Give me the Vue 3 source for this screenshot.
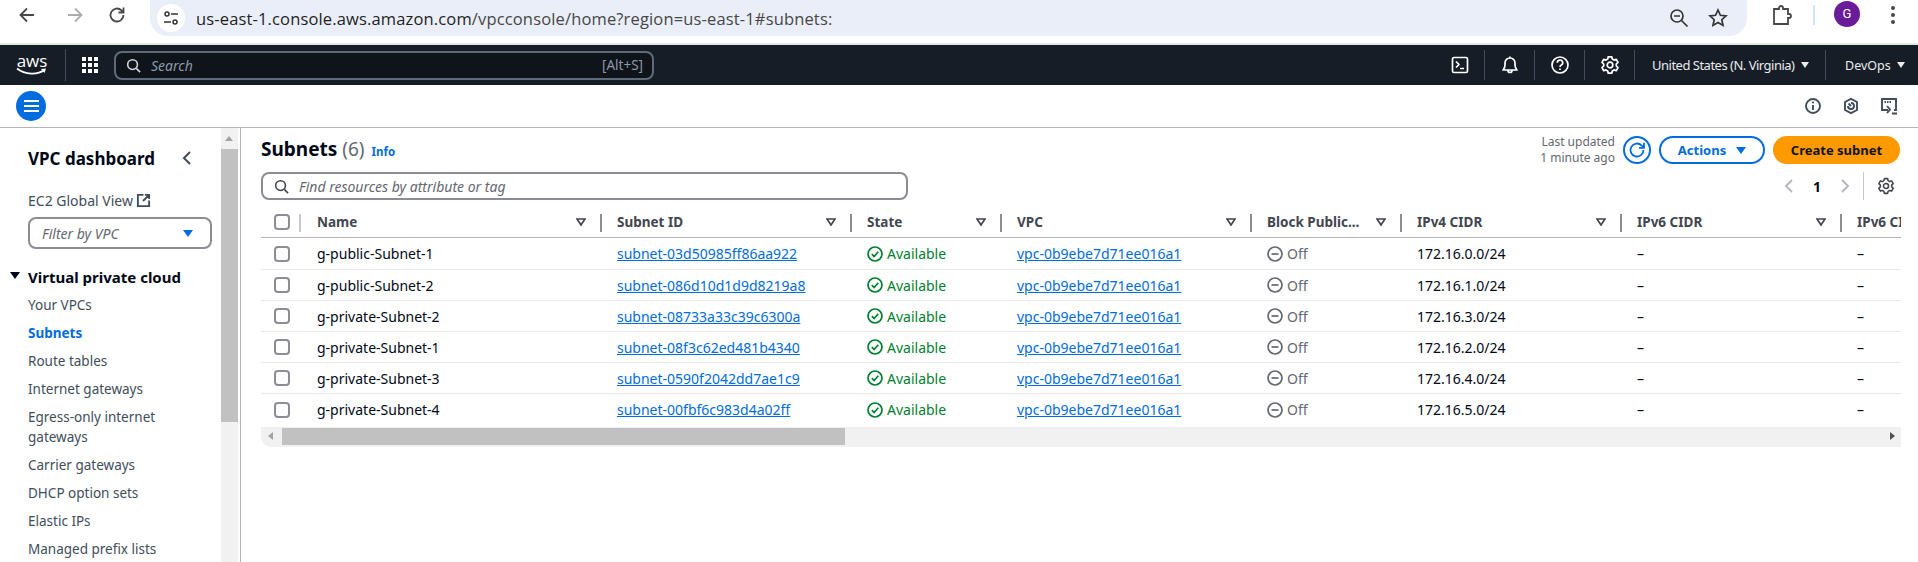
<script setup>
const navItems = ['Your VPCs', 'Subnets', 'Route tables', 'Internet gateways', 'Egress-only internet gateways', 'Carrier gateways', 'DHCP option sets', 'Elastic IPs', 'Managed prefix lists']
const columns = ['Subnet ID', 'State', 'VPC', 'Block Public...', 'IPv4 CIDR', 'IPv6 CIDR', 'IPv6 CIDR']
const subnets = [
  { name: 'g-public-Subnet-1', id: 'subnet-03d50985ff86aa922', cidr: '172.16.0.0/24' },
  { name: 'g-public-Subnet-2', id: 'subnet-086d10d1d9d8219a8', cidr: '172.16.1.0/24' },
  { name: 'g-private-Subnet-2', id: 'subnet-08733a33c39c6300a', cidr: '172.16.3.0/24' },
  { name: 'g-private-Subnet-1', id: 'subnet-08f3c62ed481b4340', cidr: '172.16.2.0/24' },
  { name: 'g-private-Subnet-3', id: 'subnet-0590f2042dd7ae1c9', cidr: '172.16.4.0/24' },
  { name: 'g-private-Subnet-4', id: 'subnet-00fbf6c983d4a02ff', cidr: '172.16.5.0/24' }
]
const gearPath = 'M8.200 1.800h3.600l.5 2.300 1.700 1 2.200-.8 1.800 3.100-1.700 1.600v2l1.700 1.600-1.800 3.100-2.200-.8-1.700 1-.5 2.300H8.200l-.5-2.300-1.700-1-2.200.8L2 12.600l1.700-1.600v-2L2 7.400l1.800-3.100 2.200.8 1.700-1z'
</script>

<template>
  <div class="page">
    <div class="browser">
      <svg class="b-icon" viewBox="0 0 20 20"><path d="M17 10H4M10 3.500 3.500 10l6.500 6.500" /></svg>
      <svg class="b-icon faded" viewBox="0 0 20 20"><path d="M3 10h13M10 3.500l6.500 6.500-6.500 6.500" /></svg>
      <svg class="b-icon" viewBox="0 0 20 20"><path d="M16.500 10a6.500 6.500 0 1 1-2-4.700L16.500 7.500M16.500 2.500v5h-5" /></svg>
      <div class="address">
        <span class="site-info">
          <svg width="18" height="18" viewBox="0 0 18 18"><circle cx="5" cy="5" r="2" /><path d="M9 5h7M2 13h7" /><circle cx="13" cy="13" r="2" /></svg>
        </span>
        <span class="url">us-east-1.console.aws.amazon.com<span class="url-dim">/vpcconsole/home?region=us-east-1#subnets:</span></span>
        <svg class="addr-icon" viewBox="0 0 20 20"><circle cx="8" cy="8" r="6" /><path d="M5 8h6M12.500 12.500 18.500 18.500" /></svg>
        <svg class="addr-icon" viewBox="0 0 20 20"><path d="m10 2 2.400 5.300 5.600.6-4.200 3.800 1.200 5.700L10 14.500l-5 2.900 1.200-5.700L2 7.900l5.600-.6z" /></svg>
      </div>
      <svg class="b-icon puzzle" viewBox="0 0 22 22"><path d="M4 5h5V4a2 2 0 0 1 4 0v1h5v5h1a2 2 0 0 1 0 4h-1v6H4z" /></svg>
      <span class="divider-blue"></span>
      <span class="avatar">G</span>
      <span class="dots"><i></i><i></i><i></i></span>
    </div>

    <header class="topnav">
      <div class="logo">
        <span class="logo-text">aws</span>
        <svg width="32" height="9" viewBox="0 0 32 9"><path d="M1 1.500C9 8 22 8 28 3" stroke="#fff" stroke-width="1.700" fill="none" /><path d="M25 2l5-.6-1.500 4.600" fill="#fff" /></svg>
      </div>
      <span class="logo-sep"></span>
      <span class="grid-icon"><i v-for="n in 9" :key="n"></i></span>
      <div class="global-search">
        <svg class="search-glass" viewBox="0 0 16 16"><circle cx="7" cy="7" r="5.200" /><path d="m11 11 4 4" /></svg>
        <span class="global-placeholder">Search</span>
        <span class="shortcut">[Alt+S]</span>
      </div>
      <div class="nav-right">
        <span class="nav-cell">
          <svg class="nav-icon" viewBox="0 0 20 20"><rect x="2.500" y="2.500" width="15" height="15" rx="1.500" /><path d="m6 6.500 3 3-3 3M10 13.500h4" /></svg>
        </span>
        <span class="nav-cell">
          <svg class="nav-icon" viewBox="0 0 20 20"><path d="M3 15c1.500-1.500 2-2.500 2-5V8a5 5 0 0 1 10 0v2c0 2.500.5 3.500 2 5zM10 1.500V3M8 15.500a2 2 0 0 0 4 0" /></svg>
        </span>
        <span class="nav-cell">
          <svg class="nav-icon" viewBox="0 0 20 20"><circle cx="10" cy="10" r="8" /><path d="M7.300 7.700a2.700 2.700 0 1 1 4 2.400c-.9.500-1.300 1-1.300 2" /><path d="M10 13.400v1.600" /></svg>
        </span>
        <span class="nav-cell">
          <svg class="nav-icon" viewBox="0 0 20 20"><path :d="gearPath" /><circle cx="10" cy="10" r="2.800" /></svg>
        </span>
        <span class="nav-text region">United States (N. Virginia) <i class="caret"></i></span>
        <span class="nav-text account">DevOps <i class="caret"></i></span>
      </div>
    </header>

    <div class="subbar">
      <span class="menu-btn"><i></i><i></i><i></i></span>
      <div class="subbar-icons">
        <svg class="sub-icon" viewBox="0 0 18 18"><circle cx="9" cy="9" r="7" /><path d="M9 8v5M9 4.500v1.800" /></svg>
        <svg class="sub-icon" viewBox="0 0 18 18"><path d="M9 1.800 15 5v8l-6 3.200L3 13V5z" /><path d="M6 9a3 3 0 1 0 3-3M6.500 6.500 9 9" /></svg>
        <svg class="sub-icon" viewBox="0 0 18 18"><path d="M8 13H2V2h14v11h-2" /><path class="monitor-dots" d="M4.500 5h7.500" /><path d="m7 9 3 3.500L7 16M12 16.500h5" /></svg>
      </div>
    </div>

    <div class="body">
      <aside class="sidebar">
        <div class="side-scroll">
          <div class="side-head">
            <span class="side-title">VPC dashboard</span>
            <svg class="side-close" viewBox="0 0 12 16"><path d="M9 2 3 8l6 6" /></svg>
          </div>
          <div class="global-view">
            EC2 Global View
            <svg class="ext-icon" viewBox="0 0 16 16"><path d="M8 2H2v12h12V8M9.500 2H14v4.500M14 2 7.500 8.500" /></svg>
          </div>
          <div class="vpc-filter">
            <span>Filter by VPC</span>
            <i class="blue-caret"></i>
          </div>
          <div class="section-title"><i class="section-caret"></i>Virtual private cloud</div>
          <ul class="side-list">
            <li v-for="item in navItems" :key="item" :class="{ active: item === 'Subnets' }">{{ item }}</li>
          </ul>
        </div>
        <div class="v-scrollbar">
          <i class="up-arrow"></i>
          <div class="v-thumb"></div>
        </div>
      </aside>

      <main class="content">
        <div class="title-row">
          <h1 class="title">Subnets <span class="count">(6)</span></h1>
          <a class="info">Info</a>
          <div class="title-actions">
            <div class="updated">Last updated<br />1 minute ago</div>
            <button class="refresh">
              <svg viewBox="0 0 20 20" width="20" height="20"><path d="M16.500 10a6.500 6.500 0 1 1-2-4.700L16.800 7.500M17 2.800v5h-5" /></svg>
            </button>
            <button class="actions">Actions <i class="blue-caret"></i></button>
            <button class="create">Create subnet</button>
          </div>
        </div>

        <div class="filter-row">
          <div class="table-search">
            <svg class="search-glass" viewBox="0 0 16 16"><circle cx="7" cy="7" r="5.200" /><path d="m11 11 4 4" /></svg>
            <span>Find resources by attribute or tag</span>
          </div>
          <div class="pager">
            <svg class="pager-arrow" viewBox="0 0 12 16"><path d="M9 2 3 8l6 6" /></svg>
            <span class="page-no">1</span>
            <svg class="pager-arrow" viewBox="0 0 12 16"><path d="m3 2 6 6-6 6" /></svg>
            <span class="pager-sep"></span>
            <svg class="pager-gear" viewBox="0 0 20 20"><path :d="gearPath" /><circle cx="10" cy="10" r="2.800" /></svg>
          </div>
        </div>

        <div class="table">
          <div class="tr th">
            <div class="td check"><span class="checkbox"></span><span class="sep light"></span></div>
            <div class="td"><span class="th-label">Name</span><svg class="sort" viewBox="0 0 10 8"><path d="M1 1h8L5 7z" /></svg></div>
            <div v-for="(col, i) in columns" :key="i" class="td">
              <span class="sep"></span>
              <span class="th-label">{{ col }}</span>
              <svg v-if="i < 6" class="sort" viewBox="0 0 10 8"><path d="M1 1h8L5 7z" /></svg>
            </div>
          </div>
          <div v-for="row in subnets" :key="row.id" class="tr">
            <div class="td check"><span class="checkbox"></span></div>
            <div class="td">{{ row.name }}</div>
            <div class="td pad"><a class="link">{{ row.id }}</a></div>
            <div class="td pad status-ok">
              <svg class="state-icon" viewBox="0 0 16 16"><circle cx="8" cy="8" r="7" /><path d="m4.800 8.200 2.300 2.300 4.200-4.800" /></svg>
              Available
            </div>
            <div class="td pad"><a class="link vpc">vpc-0b9ebe7d71ee016a1</a></div>
            <div class="td pad status-off">
              <svg class="state-icon" viewBox="0 0 16 16"><circle cx="8" cy="8" r="7" /><path d="M4.500 8h7" /></svg>
              Off
            </div>
            <div class="td pad">{{ row.cidr }}</div>
            <div class="td pad">–</div>
            <div class="td pad">–</div>
          </div>
        </div>

        <div class="h-scrollbar">
          <i class="left-arrow"></i>
          <div class="h-thumb"></div>
          <i class="right-arrow"></i>
        </div>
      </main>
    </div>
  </div>
</template>

<style>
html, body { margin: 0; background: #fff; overflow: hidden; }
</style>

<style scoped>
.page {
  width: 1918px;
  height: 562px;
  overflow: hidden;
  font-family: "Noto Sans", "Open Sans", sans-serif;
  font-size: 14px;
  color: #000716;
}
i { display: block; }

/* browser chrome */
.browser {
  height: 43px;
  display: flex;
  align-items: flex-start;
  padding-left: 17px;
  box-sizing: border-box;
}
.b-icon { width: 20px; height: 20px; margin-top: 5px; margin-right: 28px; fill: none; stroke: #474747; stroke-width: 1.800; flex: none; }
.b-icon.faded { stroke: #adadad; margin-right: 22px; }
.b-icon:nth-child(3) { margin-right: 23px; }
.address {
  width: 1597px;
  height: 36px;
  background: #e9eef8;
  border-radius: 0 0 18px 18px;
  display: flex;
  align-items: center;
  flex: none;
}
.site-info {
  width: 28px;
  height: 28px;
  margin-left: 7px;
  border-radius: 50%;
  background: #fff;
  display: flex;
  align-items: center;
  justify-content: center;
}
.site-info svg { fill: none; stroke: #333; stroke-width: 1.500; }
.url {
  margin-left: 11px;
  font-family: "Open Sans", sans-serif;
  font-size: 16.500px;
  letter-spacing: 0.150px;
  color: #1f1f1f;
  flex: 1;
  white-space: nowrap;
}
.url-dim { color: #474747; }
.addr-icon { width: 20px; height: 20px; fill: none; stroke: #333; stroke-width: 1.700; margin-right: 19px; flex: none; }
.puzzle { width: 22px; height: 22px; margin: 4px 0 0 23px; fill: none; stroke-width: 1.800; }
.divider-blue { width: 2px; height: 20px; margin: 5px 0 0 21px; background: #d3e3fd; }
.avatar {
  width: 26px;
  height: 26px;
  margin: 1px 0 0 19px;
  border-radius: 50%;
  background: #6a1b9a;
  color: #fff;
  font-family: Roboto, sans-serif;
  font-size: 13px;
  text-align: center;
  line-height: 26px;
}
.dots { display: flex; flex-direction: column; gap: 3px; margin: 6px 0 0 31px; }
.dots i { width: 4px; height: 4px; border-radius: 50%; background: #474747; }

/* aws nav */
.topnav {
  margin-top: 2px;
  height: 40px;
  background: #161d26;
  display: flex;
  align-items: center;
  box-shadow: 0 -2px 0 #e6e6e6;
  color: #fff;
}
.logo { width: 32px; margin-left: 16px; display: flex; flex-direction: column; align-items: center; }
.logo-text { font-size: 17px; line-height: 12px; color: #fff; font-family: "Open Sans", sans-serif; }
.logo-sep { width: 1px; height: 32px; margin-left: 17px; background: #414d5c; }
.grid-icon { display: grid; grid-template-columns: repeat(3, 4px); gap: 2px; margin-left: 16px; }
.grid-icon i { width: 4px; height: 4px; background: #fff; }
.global-search {
  width: 540px;
  height: 29px;
  margin-left: 16px;
  box-sizing: border-box;
  border: 2px solid #5f6b7a;
  border-radius: 8px;
  background: #0f141a;
  display: flex;
  align-items: center;
  padding: 0 9px 0 10px;
}
.search-glass { width: 15px; height: 15px; fill: none; stroke: #d1d5db; stroke-width: 1.700; flex: none; }
.global-placeholder { margin-left: 10px; font-style: italic; font-size: 14px; color: #8d99a8; flex: 1; }
.shortcut { font-size: 13.500px; color: #8d99a8; }
.nav-right { margin-left: auto; display: flex; align-items: center; height: 32px; }
.nav-cell {
  width: 50px;
  height: 30px;
  display: flex;
  align-items: center;
  justify-content: center;
  border-right: 1px solid #414d5c;
  box-sizing: border-box;
}
.nav-icon { width: 20px; height: 20px; fill: none; stroke: #fff; stroke-width: 1.700; stroke-linejoin: round; }
.nav-text { display: flex; align-items: center; gap: 6px; font-size: 13px; letter-spacing: -0.500px; color: #e9ebed; white-space: nowrap; }
.region { margin-left: 17px; width: 174px; height: 30px; border-right: 1px solid #414d5c; box-sizing: border-box; }
.account { margin-left: 19px; width: 73px; font-size: 12.500px; letter-spacing: 0; }
.caret { width: 0; height: 0; border-left: 4px solid transparent; border-right: 4px solid transparent; border-top: 6px solid #e9ebed; }

/* sub bar */
.subbar {
  height: 42px;
  border-bottom: 1px solid #b4b4bb;
  display: flex;
  align-items: center;
  justify-content: space-between;
}
.menu-btn {
  width: 30px;
  height: 30px;
  margin-left: 16px;
  border-radius: 50%;
  background: #006ce0;
  display: flex;
  flex-direction: column;
  align-items: center;
  justify-content: center;
  gap: 3px;
}
.menu-btn i { width: 15px; height: 2px; background: #fff; }
.subbar-icons { display: flex; gap: 20px; margin-right: 20px; }
.sub-icon { width: 18px; height: 18px; fill: none; stroke: #414d5c; stroke-width: 1.900; }
.monitor-dots { stroke-width: 2; stroke-dasharray: 1.500 1; }

.body { display: flex; height: 434px; }

/* sidebar */
.sidebar {
  width: 241px;
  flex: none;
  box-sizing: border-box;
  border-right: 1px solid #b4b4bb;
  display: flex;
}
.side-scroll { width: 221px; padding-left: 28px; box-sizing: border-box; flex: none; }
.side-head { display: flex; align-items: center; justify-content: space-between; height: 24px; margin-top: 18px; padding-right: 28px; }
.side-title { font-size: 17px; font-weight: 700; white-space: nowrap; }
.side-close { width: 12px; height: 16px; fill: none; stroke: #414d5c; stroke-width: 2; }
.global-view { display: flex; align-items: center; gap: 3px; margin-top: 20px; height: 20px; color: #414d5c; }
.ext-icon { width: 15px; height: 15px; fill: none; stroke: #414d5c; stroke-width: 2; }
.vpc-filter {
  width: 184px;
  height: 32px;
  margin-top: 7px;
  box-sizing: border-box;
  border: 2px solid #8c8c94;
  border-radius: 8px;
  display: flex;
  align-items: center;
  justify-content: space-between;
  padding: 0 17px 0 12px;
  font-style: italic;
  color: #656871;
}
.blue-caret { width: 0; height: 0; border-left: 5px solid transparent; border-right: 5px solid transparent; border-top: 7px solid #006ce0; }
.section-title { position: relative; margin-top: 18px; height: 20px; line-height: 20px; font-size: 15px; font-weight: 700; white-space: nowrap; }
.section-caret {
  position: absolute;
  left: -18px;
  top: 5px;
  width: 0;
  height: 0;
  border-left: 5px solid transparent;
  border-right: 5px solid transparent;
  border-top: 7px solid #000716;
}
.side-list { list-style: none; margin: 8px 0 0; padding: 0; color: #414d5c; font-size: 13.500px; }
.side-list li { line-height: 20px; margin-bottom: 8px; width: 150px; }
.side-list li.active { color: #006ce0; font-weight: 700; }
.v-scrollbar { width: 17px; background: #f1f1f1; position: relative; padding-top: 21px; box-sizing: border-box; }
.v-thumb { height: 273px; background: #c1c1c1; }
.up-arrow {
  position: absolute;
  top: 8px;
  left: 4px;
  width: 0;
  height: 0;
  border-left: 4.500px solid transparent;
  border-right: 4.500px solid transparent;
  border-bottom: 5px solid #a3a3a3;
}

/* main */
.content { flex: 1; padding: 8px 17px 0 20px; min-width: 0; }
.title-row { display: flex; align-items: center; height: 28px; }
.title { margin: 0 0 3px; font-size: 19px; font-weight: 700; line-height: 24px; }
.count { font-weight: 400; color: #656871; }
.info { margin: 2px 0 0 7px; font-size: 11.500px; font-weight: 700; color: #006ce0; }
.title-actions { margin-left: auto; margin-right: 1px; display: flex; align-items: center; }
.updated { font-size: 12px; line-height: 16px; color: #656871; text-align: right; margin-right: 8px; }
button { font-family: inherit; box-sizing: border-box; cursor: pointer; padding: 0; }
.refresh {
  width: 28px;
  height: 28px;
  border: 2px solid #006ce0;
  border-radius: 50%;
  background: #fff;
  display: flex;
  align-items: center;
  justify-content: center;
  margin-right: 8px;
}
.refresh svg { fill: none; stroke: #006ce0; stroke-width: 1.800; }
.actions {
  width: 106px;
  height: 28px;
  border: 2px solid #006ce0;
  border-radius: 14px;
  background: #fff;
  color: #006ce0;
  font-size: 13px;
  font-weight: 700;
  display: flex;
  align-items: center;
  justify-content: center;
  gap: 10px;
  margin-right: 8px;
}
.create {
  width: 127px;
  height: 28px;
  border: 0;
  border-radius: 14px;
  background: #ff9900;
  color: #0f141a;
  font-size: 13px;
  font-weight: 700;
}
.filter-row { display: flex; align-items: center; justify-content: space-between; margin-top: 8px; height: 28px; }
.table-search {
  width: 647px;
  height: 28px;
  box-sizing: border-box;
  border: 2px solid #8c8c94;
  border-radius: 8px;
  display: flex;
  align-items: center;
  padding-left: 11px;
  gap: 10px;
  font-style: italic;
  font-size: 14px;
  color: #656871;
}
.table-search .search-glass { stroke: #424650; }
.pager { display: flex; align-items: center; height: 28px; }
.pager-arrow { width: 12px; height: 16px; fill: none; stroke: #b4b4bb; stroke-width: 1.800; }
.page-no { width: 44px; text-align: center; font-weight: 700; font-size: 14px; }
.pager-sep { width: 1px; height: 28px; background: #c6c6cd; margin-left: 12px; }
.pager-gear { width: 18px; height: 18px; margin-left: 13px; margin-right: 6px; fill: none; stroke: #424650; stroke-width: 1.700; stroke-linejoin: round; }

.table { margin-top: 6px; width: 1640px; overflow: hidden; }
.tr {
  display: grid;
  grid-template-columns: 39px 300px 250px 150px 250px 150px 220px 220px 220px;
  height: 31px;
  box-sizing: border-box;
  border-bottom: 1px solid #e8e8ed;
}
.tr:nth-child(2) { height: 32px; }
.tr:last-child { border-bottom: 0; }
.tr.th { height: 32px; border-bottom: 1px solid #b4b4bb; font-weight: 700; color: #424650; }
.th .td { font-size: 13.500px; padding-top: 1px; }
.td { display: flex; align-items: center; position: relative; white-space: nowrap; font-size: 14px; }
.td.pad { padding-left: 17px; }
.th .td:nth-child(n + 3) { padding-left: 17px; }
.td:nth-child(2) { padding-left: 17px; }
.check { padding-left: 13px; }
.checkbox { display: block; width: 16px; height: 16px; box-sizing: border-box; border: 2px solid #8c8c94; border-radius: 4px; }
.th-label { flex: 1; }
.sort { width: 10px; height: 8px; margin-right: 14px; fill: none; stroke: #424650; stroke-width: 1.700; flex: none; }
.sep { position: absolute; left: 0; top: 8px; width: 2px; height: 18px; background: #8c8c94; }
.sep.light { left: 38px; background: #c6c6cd; }
.link { color: #006ce0; text-decoration: underline; }
.status-ok { color: #00802f; gap: 4px; }
.status-off { color: #656871; gap: 4px; }
.state-icon { width: 16px; height: 16px; fill: none; stroke: currentColor; stroke-width: 1.700; flex: none; }
.h-scrollbar {
  width: 1640px;
  height: 20px;
  margin-top: 2px;
  background: #f1f1f1;
  border-radius: 0 0 0 10px;
  display: flex;
  align-items: flex-start;
  position: relative;
}
.h-thumb { width: 563px; height: 17px; margin: 1px 0 0 21px; background: #c1c1c1; }
.left-arrow {
  position: absolute;
  left: 7px;
  top: 5px;
  border-top: 4.500px solid transparent;
  border-bottom: 4.500px solid transparent;
  border-right: 5px solid #a3a3a3;
}
.right-arrow {
  position: absolute;
  right: 6px;
  top: 5px;
  border-top: 4.500px solid transparent;
  border-bottom: 4.500px solid transparent;
  border-left: 5px solid #505050;
}
</style>
